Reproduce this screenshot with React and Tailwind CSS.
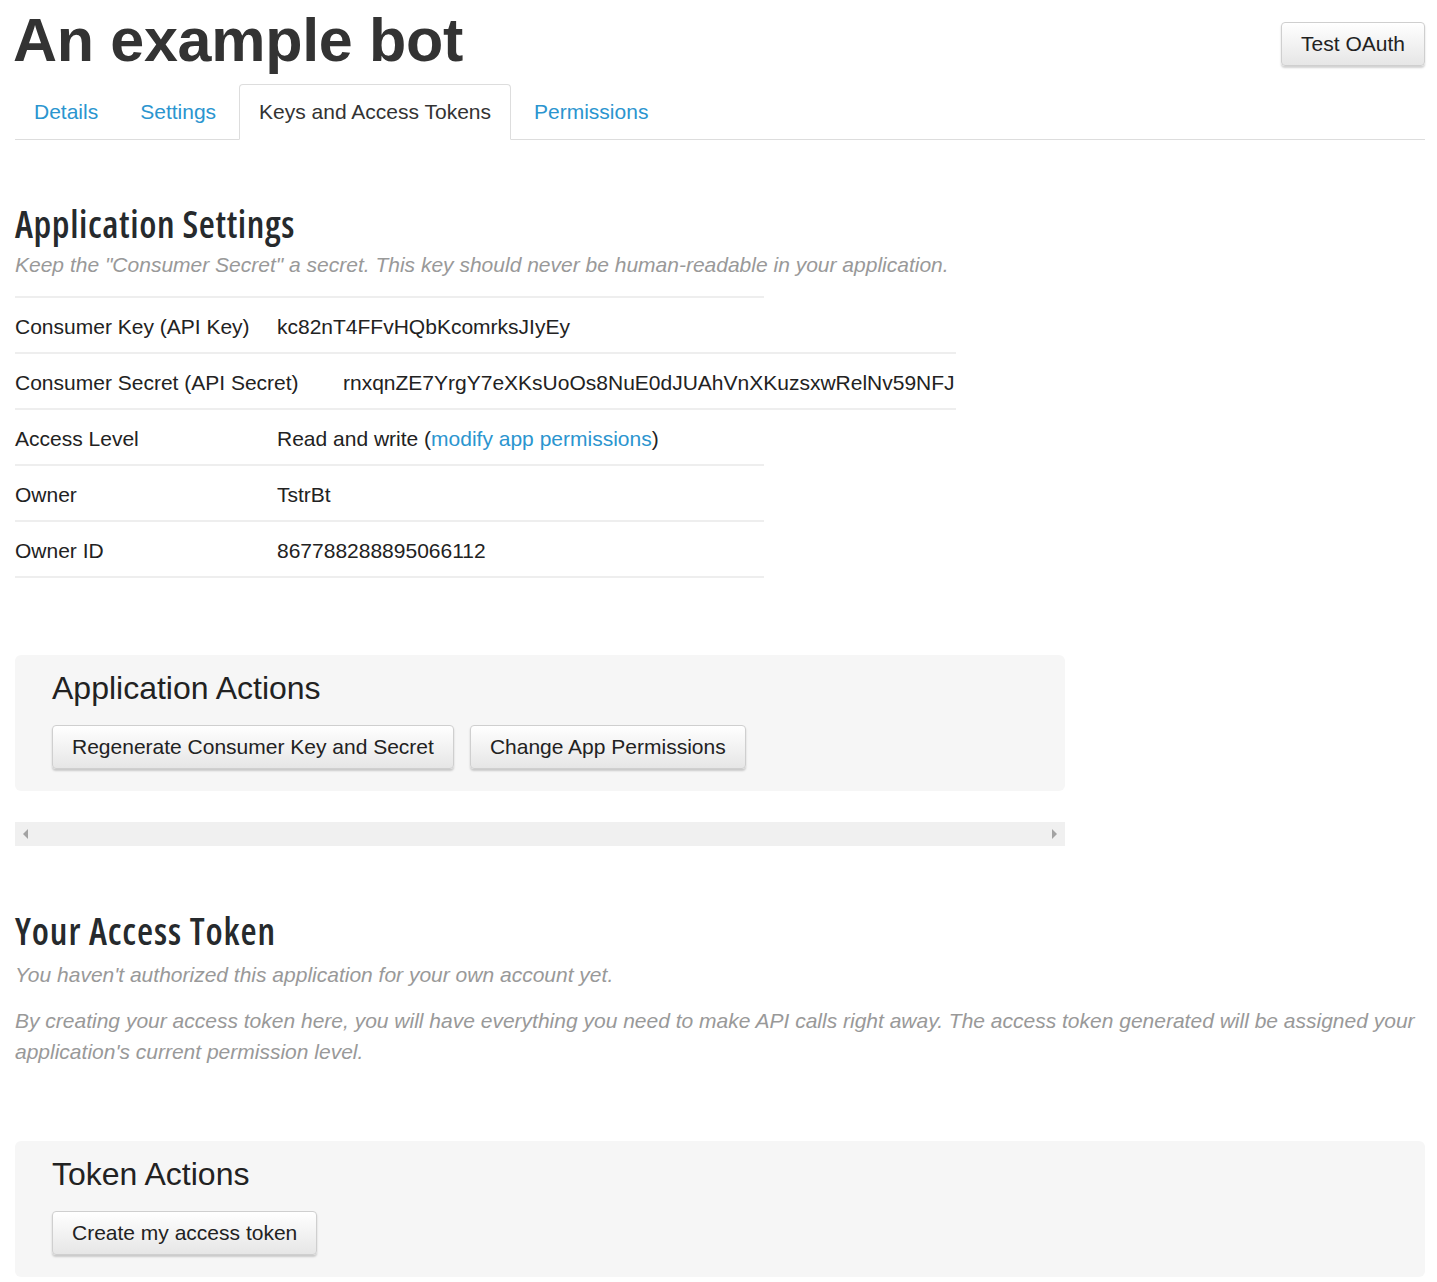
import React from 'react';

const rows = [
  { label: 'Consumer Key (API Key)', value: 'kc82nT4FFvHQbKcomrksJIyEy', w: 'w-[262px]' },
  { label: 'Consumer Secret (API Secret)', value: 'rnxqnZE7YrgY7eXKsUoOs8NuE0dJUAhVnXKuzsxwRelNv59NFJ', w: 'w-[328px]', wide: true },
  { label: 'Access Level', value: 'access', w: 'w-[262px]', wide: true },
  { label: 'Owner', value: 'TstrBt', w: 'w-[262px]' },
  { label: 'Owner ID', value: '867788288895066112', w: 'w-[262px]' },
];

const headingFont = { fontFamily: '"Open Sans", "Liberation Sans", sans-serif' };

const Btn = ({ children }) => (
  <button className="h-[44px] px-[19px] rounded-[4px] border border-[#cfcfcf] bg-gradient-to-b from-white to-[#e6e6e6] shadow-[0_2px_2px_rgba(0,0,0,0.18)] text-[21px] text-[#222] whitespace-nowrap">
    {children}
  </button>
);

export default function App() {
  return (
    <div className="bg-white min-h-[1282px] pl-[15px] pr-[12px] pb-[4px] text-[#333]" style={{ fontFamily: '"Liberation Sans", Arial, sans-serif' }}>
      {/* Header */}
      <div className="flex items-start justify-between">
        <h1 className="text-[61px] leading-[80px] font-bold text-[#333] tracking-[-0.3px] -ml-[2px]">An example bot</h1>
        <div className="pt-[22px]">
          <Btn>Test OAuth</Btn>
        </div>
      </div>

      {/* Tabs */}
      <div className="flex border-b border-[#ddd] mt-[4px] text-[21px]">
        <a className="pl-[19px] pr-[21px] h-[55px] flex items-center text-[#2b95cf]">Details</a>
        <a className="px-[21px] mr-[2px] h-[55px] flex items-center text-[#2b95cf]">Settings</a>
        <a className="px-[19px] h-[56px] -mb-px flex items-center bg-white border border-[#ddd] border-b-white rounded-t-[4px] text-[#333]">Keys and Access Tokens</a>
        <a className="pl-[23px] h-[55px] flex items-center text-[#2b95cf]">Permissions</a>
      </div>

      {/* Application Settings */}
      <h2 className="mt-[62px] text-[37px] leading-[44px] font-semibold font-stretch-[75%] tracking-[0.6px] text-[#262a2d]" style={headingFont}>
        Application Settings
      </h2>
      <p className="mt-[4px] italic text-[21px] leading-[30px] text-[#999]">
        Keep the "Consumer Secret" a secret. This key should never be human-readable in your application.
      </p>

      <div className="mt-[16px] w-[749px] text-[21px] text-[#222]">
        {rows.map((r) => (
          <div
            key={r.label}
            className={`flex items-center h-[56px] pt-[3px] border-t-2 border-[#eee] ${r.wide ? 'w-[941px]' : ''}`}
          >
            <div className={`${r.w} shrink-0`}>{r.label}</div>
            <div className="whitespace-nowrap">
              {r.value === 'access' ? (
                <>Read and write (<a className="text-[#2b95cf]">modify app permissions</a>)</>
              ) : (
                r.value
              )}
            </div>
          </div>
        ))}
        <div className="border-t-2 border-[#eee]" />
      </div>

      {/* Application Actions */}
      <div className="mt-[77px] w-[1050px] bg-[#f6f6f6] rounded-[6px] px-[37px] pt-[13px] pb-[22px]">
        <h3 className="text-[32px] leading-[40px] text-[#222]">Application Actions</h3>
        <div className="mt-[17px] flex gap-[16px]">
          <Btn>Regenerate Consumer Key and Secret</Btn>
          <Btn>Change App Permissions</Btn>
        </div>
      </div>

      {/* scroll strip */}
      <div className="mt-[31px] w-[1050px] h-[24px] bg-[#f0f0f0] flex items-center justify-between px-[8px]">
        <svg width="6" height="10" viewBox="0 0 6 10"><path d="M5 0 L0 5 L5 10 Z" fill="#a3a3a3" /></svg>
        <svg width="6" height="10" viewBox="0 0 6 10"><path d="M1 0 L6 5 L1 10 Z" fill="#a3a3a3" /></svg>
      </div>

      {/* Your Access Token */}
      <h2 className="mt-[63px] text-[37px] leading-[44px] font-semibold font-stretch-[75%] tracking-[0.9px] text-[#262a2d]" style={headingFont}>
        Your Access Token
      </h2>
      <p className="mt-[6px] italic text-[21px] leading-[31px] text-[#999]">
        You haven't authorized this application for your own account yet.
      </p>
      <p className="mt-[15px] italic text-[21px] leading-[31px] text-[#999]">
        By creating your access token here, you will have everything you need to make API calls right away. The access token generated will be assigned your application's current permission level.
      </p>

      {/* Token Actions */}
      <div className="mt-[74px] bg-[#f6f6f6] rounded-[6px] px-[37px] pt-[13px] pb-[22px]">
        <h3 className="text-[32px] leading-[40px] text-[#222]">Token Actions</h3>
        <div className="mt-[17px] flex">
          <Btn>Create my access token</Btn>
        </div>
      </div>
    </div>
  );
}
